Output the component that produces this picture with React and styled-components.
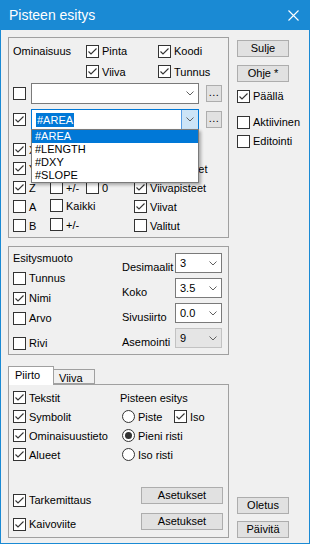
import styled, { createGlobalStyle } from "styled-components";

const GlobalStyle = createGlobalStyle`
  body {
    margin: 0;
    background: #f0f0f0;
  }
  * {
    box-sizing: border-box;
  }
`;

const Window = styled.div`
  width: 310px;
  height: 544px;
  display: flex;
  flex-direction: column;
  background: #f0f0f0;
  border: 1px solid #1a8ad4;
  border-top: none;
  font-family: "Liberation Sans", Arial, sans-serif;
  font-size: 11px;
  color: #000;
`;

const TitleBar = styled.div`
  height: 30px;
  flex: none;
  display: flex;
  align-items: center;
  padding-left: 9px;
  margin: 0 -1px;
  background: #1a8ad4;
  color: #fff;
  font-size: 14px;
`;

const CloseIcon = styled.svg`
  margin-left: auto;
  margin-right: 11px;
`;

const Body = styled.div`
  flex: 1;
  display: flex;
  padding: 7px 0 5px 7px;
`;

const LeftCol = styled.div`
  width: 221px;
  display: flex;
  flex-direction: column;
`;

const RightCol = styled.div`
  width: 52px;
  margin-left: 8px;
  display: flex;
  flex-direction: column;
`;

const Group = styled.div`
  height: ${(p) => p.h}px;
  margin-top: ${(p) => p.mt || 0}px;
  border: 1px solid #a0a0a0;
  padding: ${(p) => p.pt || 0}px 0 0 4px;
  display: flex;
  flex-direction: ${(p) => (p.row ? "row" : "column")};
  position: relative;
`;

const TopGrid = styled.div`
  display: grid;
  grid-template-columns: 73px 72px auto;
  align-items: center;
  height: ${(p) => p.h}px;
  margin-top: ${(p) => p.mt || 0}px;
`;

const OptGrid = styled.div`
  display: grid;
  grid-template-columns: 37px 36px 48px auto;
  grid-auto-rows: 19px;
  align-items: center;
  margin-top: 10px;
`;

const Span2 = styled.div`
  grid-column: span 2;
`;

const Span3 = styled.div`
  grid-column: span 3;
`;

const CheckLabel = styled.label`
  display: inline-flex;
  align-items: center;
  gap: 3px;
  white-space: nowrap;
  line-height: 14px;
`;

const Box = styled.span`
  width: 13px;
  height: 13px;
  flex: none;
  border: 1px solid #333;
  background: #fff;
  display: inline-flex;
  align-items: center;
  justify-content: center;
`;

const Check = ({ on, children }) => (
  <CheckLabel>
    <Box>
      {on && (
        <svg width="11" height="11" viewBox="0 0 11 11">
          <polyline points="1.5,5.5 4,8 9.5,2.5" fill="none" stroke="#333" strokeWidth="1.1" />
        </svg>
      )}
    </Box>
    {children && <span>{children}</span>}
  </CheckLabel>
);

const RadioCircle = styled.span`
  width: 13px;
  height: 13px;
  flex: none;
  border-radius: 50%;
  border: 1px solid #333;
  background: #fff;
  display: inline-flex;
  align-items: center;
  justify-content: center;
  &::after {
    content: "";
    width: 7px;
    height: 7px;
    border-radius: 50%;
    background: ${(p) => (p.on ? "#333" : "transparent")};
  }
`;

const Radio = ({ on, children }) => (
  <CheckLabel>
    <RadioCircle on={on} />
    <span>{children}</span>
  </CheckLabel>
);

const ComboRow = styled.div`
  display: flex;
  align-items: center;
  height: 21px;
  margin-top: ${(p) => p.mt || 0}px;
`;

const ComboBox = styled.div`
  position: relative;
  width: ${(p) => p.w}px;
  height: ${(p) => p.h || 21}px;
  margin-left: ${(p) => p.ml || 0}px;
  flex: none;
  display: flex;
  align-items: center;
  background: ${(p) => (p.droplist ? "#e5e5e5" : "#fff")};
  border: 1px solid ${(p) => (p.focus ? "#0078d7" : p.droplist ? "#c2c2c2" : "#7a7a7a")};
`;

const ComboValue = styled.div`
  flex: 1;
  padding-left: 4px;
  white-space: nowrap;
`;

const Selected = styled.span`
  background: #0078d7;
  color: #fff;
  padding: 1px;
`;

const ComboArrow = styled.div`
  width: 17px;
  align-self: stretch;
  display: flex;
  align-items: center;
  justify-content: center;
  background: ${(p) => (p.hot ? "#cce4f7" : "transparent")};
  border-left: 1px solid ${(p) => (p.hot ? "#569de5" : "transparent")};
`;

const Chevron = () => (
  <svg width="8" height="5" viewBox="0 0 8 5">
    <polyline points="0.5,0.5 4,4 7.5,0.5" fill="none" stroke="#606060" strokeWidth="1" />
  </svg>
);

const DropList = styled.div`
  position: absolute;
  top: 100%;
  left: -1px;
  width: 168px;
  background: #fff;
  border: 1px solid #7a7a7a;
  box-shadow: 2px 2px 3px rgba(0, 0, 0, 0.3);
  z-index: 10;
`;

const ListItem = styled.div`
  height: 13px;
  line-height: 13px;
  padding-left: 3px;
  background: ${(p) => (p.sel ? "#0078d7" : "transparent")};
  color: ${(p) => (p.sel ? "#fff" : "#000")};
`;

const Button = styled.div`
  width: ${(p) => p.w || 52}px;
  height: ${(p) => p.h || 17}px;
  margin-top: ${(p) => p.mt || 0}px;
  margin-left: ${(p) => p.ml || 0}px;
  flex: none;
  display: flex;
  align-items: center;
  justify-content: center;
  background: #e1e1e1;
  border: 1px solid #adadad;
  line-height: 1;
`;

const Dots = styled(Button)`
  align-items: flex-end;
  padding-bottom: 3px;
  letter-spacing: 0.5px;
`;

const SideItem = styled.div`
  height: 14px;
  display: flex;
  align-items: center;
  margin-top: ${(p) => p.mt || 0}px;
`;

const Spacer = styled.div`
  flex: 1;
`;

const StackCol = styled.div`
  width: ${(p) => p.w}px;
  display: flex;
  flex-direction: column;
`;

const Caption = styled.div`
  height: 14px;
  line-height: 14px;
  white-space: nowrap;
`;

const StackRow = styled.div`
  height: ${(p) => p.h || 20}px;
  margin-top: ${(p) => p.mt || 0}px;
  padding-left: ${(p) => p.pl || 0}px;
  display: flex;
  align-items: center;
`;

const RadioCell = styled.div`
  width: ${(p) => (p.w ? `${p.w}px` : "auto")};
`;

const FieldGrid = styled.div`
  display: grid;
  grid-template-columns: 53px 47px;
  grid-auto-rows: 20px;
  row-gap: 5px;
  padding-top: 2px;
`;

const FieldLabel = styled.div`
  align-self: end;
  line-height: 14px;
  margin-bottom: -1px;
`;

const TabStrip = styled.div`
  margin-top: 11px;
  height: 18px;
  display: flex;
  align-items: flex-end;
  position: relative;
  z-index: 1;
`;

const Tab = styled.div`
  width: ${(p) => p.w}px;
  height: ${(p) => (p.active ? 19 : 15)}px;
  margin-bottom: ${(p) => (p.active ? -1 : 0)}px;
  padding-left: ${(p) => p.pl}px;
  padding-top: 2px;
  background: ${(p) => (p.active ? "#fff" : "#f0f0f0")};
  border: 1px solid #a0a0a0;
  border-bottom: ${(p) => (p.active ? "none" : "1px solid #a0a0a0")};
  border-left: ${(p) => (p.active ? "1px solid #a0a0a0" : "none")};
`;

const TabPanel = styled.div`
  flex: 1;
  border: 1px solid #a0a0a0;
  padding: 3px 5px 6px 4px;
  display: flex;
  flex-direction: column;
`;

const PanelTop = styled.div`
  display: flex;
`;

const Rows19 = styled.div`
  width: ${(p) => p.w}px;
  display: grid;
  grid-auto-rows: 19px;
  align-items: center;
`;

const BottomRow = styled.div`
  height: ${(p) => p.h}px;
  margin-top: ${(p) => p.mt || 0}px;
  display: flex;
  justify-content: space-between;
`;

const BottomCheck = styled.div`
  align-self: flex-end;
  height: 14px;
  display: flex;
  align-items: center;
`;

const App = () => {
  return (
    <>
      <GlobalStyle />
      <Window>
        <TitleBar>
          Pisteen esitys
          <CloseIcon width="11" height="11" viewBox="0 0 11 11">
            <path d="M0.5 0.5 L10.5 10.5 M10.5 0.5 L0.5 10.5" stroke="#fff" strokeWidth="1.1" />
          </CloseIcon>
        </TitleBar>
        <Body>
          <LeftCol>
            <Group h={201}>
              <TopGrid h={20} mt={3}>
                <span>Ominaisuus</span>
                <Check on>Pinta</Check>
                <Check on>Koodi</Check>
              </TopGrid>
              <TopGrid h={21}>
                <span />
                <Check on>Viiva</Check>
                <Check on>Tunnus</Check>
              </TopGrid>
              <ComboRow mt={1}>
                <Check />
                <ComboBox w={168} ml={5}>
                  <ComboValue />
                  <ComboArrow>
                    <Chevron />
                  </ComboArrow>
                </ComboBox>
                <Dots w={16} ml={7}>...</Dots>
              </ComboRow>
              <ComboRow mt={5}>
                <Check on />
                <ComboBox w={168} ml={5} focus>
                  <ComboValue>
                    <Selected>#AREA</Selected>
                  </ComboValue>
                  <ComboArrow hot>
                    <Chevron />
                  </ComboArrow>
                  <DropList>
                    <ListItem sel>#AREA</ListItem>
                    <ListItem>#LENGTH</ListItem>
                    <ListItem>#DXY</ListItem>
                    <ListItem>#SLOPE</ListItem>
                  </DropList>
                </ComboBox>
                <Dots w={16} ml={7}>...</Dots>
              </ComboRow>
              <OptGrid>
                <Check on>X</Check>
                <Span3 />

                <Check on>Y</Check>
                <Span2 />
                <Check on>Pintapisteet</Check>

                <Check on>Z</Check>
                <Check>+/-</Check>
                <Check>0</Check>
                <Check on>Viivapisteet</Check>

                <Check>A</Check>
                <Span2>
                  <Check>Kaikki</Check>
                </Span2>
                <Check on>Viivat</Check>

                <Check>B</Check>
                <Span2>
                  <Check>+/-</Check>
                </Span2>
                <Check>Valitut</Check>
              </OptGrid>
            </Group>

            <Group h={109} mt={8} pt={4} row>
              <StackCol w={109}>
                <Caption>Esitysmuoto</Caption>
                <StackRow mt={3}>
                  <Check>Tunnus</Check>
                </StackRow>
                <StackRow>
                  <Check on>Nimi</Check>
                </StackRow>
                <StackRow>
                  <Check>Arvo</Check>
                </StackRow>
                <StackRow mt={5}>
                  <Check>Rivi</Check>
                </StackRow>
              </StackCol>
              <FieldGrid>
                <FieldLabel>Desimaalit</FieldLabel>
                <ComboBox w={47} h={20}>
                  <ComboValue>3</ComboValue>
                  <ComboArrow>
                    <Chevron />
                  </ComboArrow>
                </ComboBox>
                <FieldLabel>Koko</FieldLabel>
                <ComboBox w={47} h={20}>
                  <ComboValue>3.5</ComboValue>
                  <ComboArrow>
                    <Chevron />
                  </ComboArrow>
                </ComboBox>
                <FieldLabel>Sivusiirto</FieldLabel>
                <ComboBox w={47} h={20}>
                  <ComboValue>0.0</ComboValue>
                  <ComboArrow>
                    <Chevron />
                  </ComboArrow>
                </ComboBox>
                <FieldLabel>Asemointi</FieldLabel>
                <ComboBox w={47} h={20} droplist>
                  <ComboValue>9</ComboValue>
                  <ComboArrow>
                    <Chevron />
                  </ComboArrow>
                </ComboBox>
              </FieldGrid>
            </Group>

            <TabStrip>
              <Tab active w={46} pl={6}>
                Piirto
              </Tab>
              <Tab w={41} pl={5}>
                Viiva
              </Tab>
            </TabStrip>
            <TabPanel>
              <PanelTop>
                <Rows19 w={107}>
                  <Check on>Tekstit</Check>
                  <Check on>Symbolit</Check>
                  <Check on>Ominaisuustieto</Check>
                  <Check on>Alueet</Check>
                </Rows19>
                <Rows19 w={100}>
                  <Caption>Pisteen esitys</Caption>
                  <StackRow h={19} pl={2}>
                    <RadioCell w={52}>
                      <Radio>Piste</Radio>
                    </RadioCell>
                    <Check on>Iso</Check>
                  </StackRow>
                  <StackRow h={19} pl={2}>
                    <Radio on>Pieni risti</Radio>
                  </StackRow>
                  <StackRow h={19} pl={2}>
                    <Radio>Iso risti</Radio>
                  </StackRow>
                </Rows19>
              </PanelTop>
              <Spacer />
              <BottomRow h={20}>
                <BottomCheck>
                  <Check on>Tarkemittaus</Check>
                </BottomCheck>
                <Button w={82}>Asetukset</Button>
              </BottomRow>
              <BottomRow h={18} mt={6}>
                <BottomCheck>
                  <Check on>Kaivoviite</Check>
                </BottomCheck>
                <Button w={82}>Asetukset</Button>
              </BottomRow>
            </TabPanel>
          </LeftCol>

          <RightCol>
            <Button mt={3}>Sulje</Button>
            <Button mt={8}>Ohje *</Button>
            <SideItem mt={7}>
              <Check on>Päällä</Check>
            </SideItem>
            <SideItem mt={12}>
              <Check>Aktiivinen</Check>
            </SideItem>
            <SideItem mt={5}>
              <Check>Editointi</Check>
            </SideItem>
            <Spacer />
            <Button>Oletus</Button>
            <Button mt={7}>Päivitä</Button>
          </RightCol>
        </Body>
      </Window>
    </>
  );
};

export default App;
